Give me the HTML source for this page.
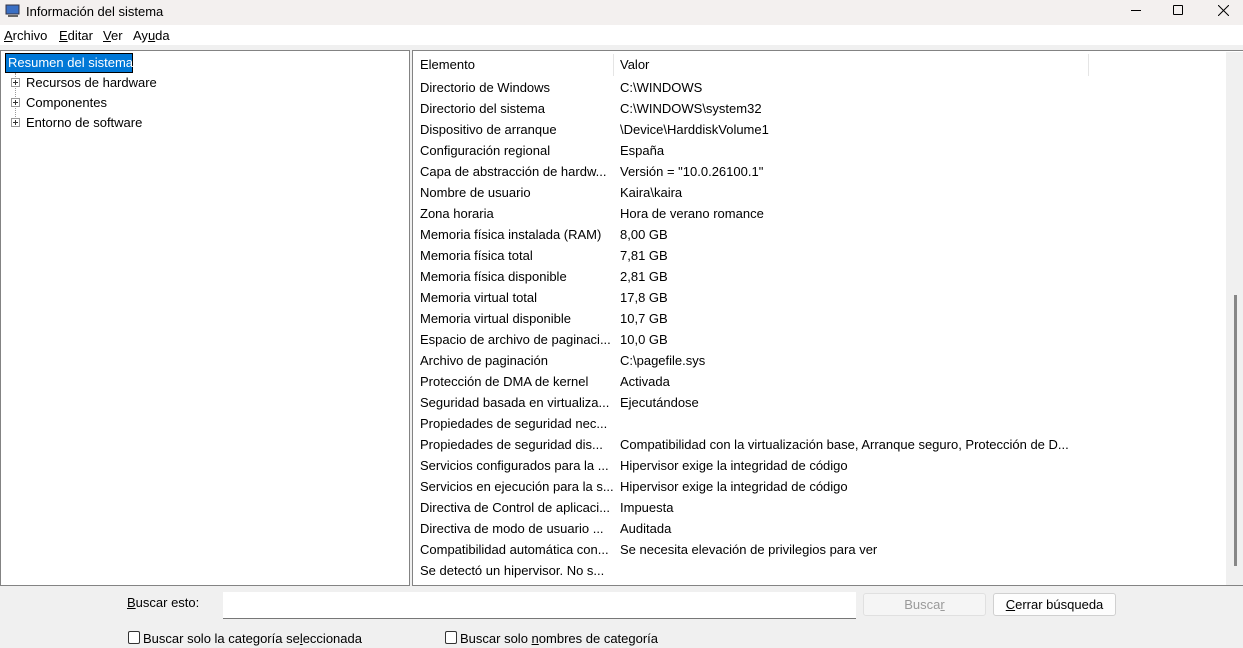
<!DOCTYPE html>
<html><head><meta charset="utf-8"><style>
*{margin:0;padding:0;box-sizing:border-box}
body{width:1243px;height:648px;overflow:hidden;background:#f0f0f0;font-family:"Liberation Sans",sans-serif;font-size:13px;color:#000;position:relative}
.abs{position:absolute;white-space:nowrap}
#title{left:0;top:0;width:1243px;height:25px;background:#f3f0ef}
#menu{left:0;top:25px;width:1243px;height:20px;background:#fff}
#lp{left:0;top:50px;width:410px;height:536px;background:#fff;border:1px solid #838383}
#rp{left:412px;top:50px;width:831px;height:536px;background:#fff;border:1px solid #838383;border-right:none}
.row{position:absolute;left:7px;height:21px;line-height:21px}
.v{position:absolute;left:200px}
u{text-decoration:underline}
.pl{position:absolute;left:10px;width:9px;height:9px;border:1px solid #999;background:#fff}
.pl:before{content:"";position:absolute;left:1px;top:3px;width:5px;height:1px;background:#333}
.pl:after{content:"";position:absolute;left:3px;top:1px;width:1px;height:5px;background:#333}
.cb{position:absolute;width:12px;height:13px;border:1px solid #333;border-radius:2px;background:#fff}
</style></head><body>
<div class="abs" id="title"></div>
<svg class="abs" style="left:5px;top:3px" width="16" height="16"><rect x="1" y="2" width="13" height="9" fill="#3a6fc4" stroke="#334" stroke-width="1"/><rect x="3" y="12" width="10" height="2" fill="#666"/></svg>
<div class="abs" style="left:26px;top:4px;font-size:13px">Información del sistema</div>
<div class="abs" style="left:1131px;top:10px;width:10px;height:1px;background:#000"></div>
<div class="abs" style="left:1173px;top:5px;width:10px;height:10px;border:1px solid #000;border-radius:1px"></div>
<svg class="abs" style="left:1218px;top:5px" width="11" height="11"><path d="M0 0L11 11M11 0L0 11" stroke="#000" stroke-width="1"/></svg>
<div class="abs" id="menu"></div>
<div class="abs" style="left:4px;top:28px"><u>A</u>rchivo</div>
<div class="abs" style="left:59px;top:28px"><u>E</u>ditar</div>
<div class="abs" style="left:103px;top:28px"><u>V</u>er</div>
<div class="abs" style="left:133px;top:28px">Ay<u>u</u>da</div>
<div class="abs" id="lp">
<div class="abs" style="left:4px;top:2px;height:20px;width:128px;background:#0078d7;color:#fff;border:1px solid #000;line-height:17px;padding-left:2px">Resumen del sistema</div>
<div class="abs" style="left:14px;top:22px;height:52px;border-left:1px dotted #999"></div>
<div class="pl" style="top:27px"></div><div class="abs" style="left:25px;top:24px">Recursos de hardware</div>
<div class="pl" style="top:47px"></div><div class="abs" style="left:25px;top:44px">Componentes</div>
<div class="pl" style="top:67px"></div><div class="abs" style="left:25px;top:64px">Entorno de software</div>
</div>
<div class="abs" id="rp">
<div class="abs" style="left:200px;top:3px;width:1px;height:22px;background:#e5e5e5"></div>
<div class="abs" style="left:675px;top:3px;width:1px;height:22px;background:#e5e5e5"></div>
<div class="abs" style="left:813px;top:1px;width:17px;height:533px;background:#f0f0f0"></div>
<div class="abs" style="left:821px;top:244px;width:3px;height:271px;background:#878787"></div>
<div class="row" style="top:3px">Elemento<span class="v">Valor</span></div>
<div class="row" style="top:26px">Directorio de Windows<span class="v">C:\WINDOWS</span></div>
<div class="row" style="top:47px">Directorio del sistema<span class="v">C:\WINDOWS\system32</span></div>
<div class="row" style="top:68px">Dispositivo de arranque<span class="v">\Device\HarddiskVolume1</span></div>
<div class="row" style="top:89px">Configuración regional<span class="v">España</span></div>
<div class="row" style="top:110px">Capa de abstracción de hardw...<span class="v">Versión = "10.0.26100.1"</span></div>
<div class="row" style="top:131px">Nombre de usuario<span class="v">Kaira\kaira</span></div>
<div class="row" style="top:152px">Zona horaria<span class="v">Hora de verano romance</span></div>
<div class="row" style="top:173px">Memoria física instalada (RAM)<span class="v">8,00 GB</span></div>
<div class="row" style="top:194px">Memoria física total<span class="v">7,81 GB</span></div>
<div class="row" style="top:215px">Memoria física disponible<span class="v">2,81 GB</span></div>
<div class="row" style="top:236px">Memoria virtual total<span class="v">17,8 GB</span></div>
<div class="row" style="top:257px">Memoria virtual disponible<span class="v">10,7 GB</span></div>
<div class="row" style="top:278px">Espacio de archivo de paginaci...<span class="v">10,0 GB</span></div>
<div class="row" style="top:299px">Archivo de paginación<span class="v">C:\pagefile.sys</span></div>
<div class="row" style="top:320px">Protección de DMA de kernel<span class="v">Activada</span></div>
<div class="row" style="top:341px">Seguridad basada en virtualiza...<span class="v">Ejecutándose</span></div>
<div class="row" style="top:362px">Propiedades de seguridad nec...</div>
<div class="row" style="top:383px">Propiedades de seguridad dis...<span class="v">Compatibilidad con la virtualización base, Arranque seguro, Protección de D...</span></div>
<div class="row" style="top:404px">Servicios configurados para la ...<span class="v">Hipervisor exige la integridad de código</span></div>
<div class="row" style="top:425px">Servicios en ejecución para la s...<span class="v">Hipervisor exige la integridad de código</span></div>
<div class="row" style="top:446px">Directiva de Control de aplicaci...<span class="v">Impuesta</span></div>
<div class="row" style="top:467px">Directiva de modo de usuario ...<span class="v">Auditada</span></div>
<div class="row" style="top:488px">Compatibilidad automática con...<span class="v">Se necesita elevación de privilegios para ver</span></div>
<div class="row" style="top:509px">Se detectó un hipervisor. No s...</div>
</div>
<div class="abs" style="left:127px;top:595px"><u>B</u>uscar esto:</div>
<div class="abs" style="left:223px;top:592px;width:633px;height:27px;background:#fff;border-bottom:1px solid #777"></div>
<div class="abs" style="left:863px;top:593px;width:123px;height:23px;background:#f5f5f5;border:1px solid #e0e0e0;border-radius:3px;color:#9a9a9a;text-align:center;line-height:21px">Busca<u>r</u></div>
<div class="abs" style="left:993px;top:593px;width:123px;height:23px;background:#fdfdfd;border:1px solid #d0d0d0;border-radius:3px;text-align:center;line-height:21px"><u>C</u>errar búsqueda</div>
<div class="cb" style="left:128px;top:631px"></div>
<div class="abs" style="left:143px;top:631px">Buscar solo la categoría se<u>l</u>eccionada</div>
<div class="cb" style="left:445px;top:631px"></div>
<div class="abs" style="left:460px;top:631px">Buscar solo <u>n</u>ombres de categoría</div>
</body></html>
